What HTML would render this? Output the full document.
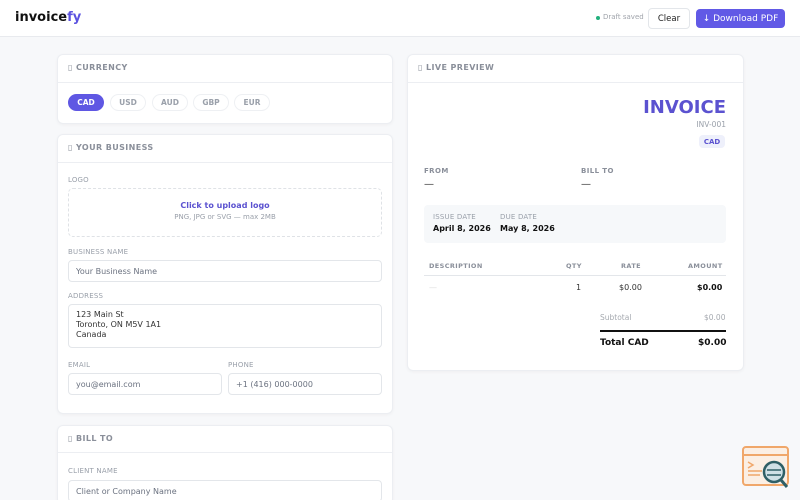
<!DOCTYPE html><html><head><style>
*{box-sizing:border-box;margin:0;padding:0}
html,body{width:800px;height:500px;overflow:hidden}
body{background:#f7f8fa;font-family:"DejaVu Sans","Liberation Sans",sans-serif;position:relative;color:#1a1a2e}
.a{position:absolute}
.hdr{left:0;top:0;width:800px;height:37px;background:#fff;border-bottom:1px solid #e8eaee}
.card{background:#fff;border:1px solid #eceef2;border-radius:6px;box-shadow:0 1px 3px rgba(0,0,0,.04)}
.ch{font-size:8px;font-weight:bold;color:#8a8f9a;letter-spacing:.4px}
.hl{height:1px;background:#eceef2}
.lbl{font-size:7px;color:#9aa0aa;letter-spacing:.2px}
.inp{border:1px solid #e3e6ea;border-radius:4px;background:#fff;font-size:8px;color:#6b7280;padding-left:7px;display:flex;align-items:center}
.pill{height:17px;border-radius:9px;border:1px solid #eef0f3;font-size:7.5px;font-weight:bold;color:#9aa0aa;display:flex;align-items:center;justify-content:center}
</style></head><body>
<div class="a hdr"></div>
<div class="a" style="left:15px;top:10px;font-size:13px;font-weight:bold;color:#111">invoice<span style="color:#5b52e0">fy</span></div>
<div class="a" style="left:596px;top:16px;width:4px;height:4px;border-radius:50%;background:#22b07d"></div>
<div class="a" style="left:603px;top:13px;font-size:7px;color:#a0a4ab">Draft saved</div>
<div class="a" style="left:648px;top:8px;width:42px;height:21px;border:1px solid #e3e6ea;border-radius:4px;font-size:8.5px;color:#222;display:flex;align-items:center;justify-content:center;background:#fff">Clear</div>
<div class="a" style="left:696px;top:9px;width:89px;height:19px;border-radius:4px;background:#6159e6;font-size:9px;color:#fff;display:flex;align-items:center;justify-content:center">↓ Download PDF</div>

<div class="a card" style="left:57px;top:54px;width:336px;height:70px"></div>
<div class="a ch" style="left:68px;top:63px">▯ CURRENCY</div>
<div class="a hl" style="left:57px;top:82px;width:336px"></div>
<div class="a pill" style="left:68px;top:94px;width:36px;background:#5f57e3;color:#fff;border-color:#5f57e3">CAD</div>
<div class="a pill" style="left:110px;top:94px;width:36px">USD</div>
<div class="a pill" style="left:152px;top:94px;width:36px">AUD</div>
<div class="a pill" style="left:193px;top:94px;width:36px">GBP</div>
<div class="a pill" style="left:234px;top:94px;width:36px">EUR</div>

<div class="a card" style="left:57px;top:134px;width:336px;height:280px"></div>
<div class="a ch" style="left:68px;top:143px">▯ YOUR BUSINESS</div>
<div class="a hl" style="left:57px;top:162px;width:336px"></div>
<div class="a lbl" style="left:68px;top:176px">LOGO</div>
<div class="a" style="left:68px;top:188px;width:314px;height:49px;border:1px dashed #dfe2e6;border-radius:5px;text-align:center">
<div style="font-size:8px;font-weight:bold;color:#5b52d0;margin-top:12px">Click to upload logo</div>
<div style="font-size:7px;color:#9aa0aa;margin-top:3px">PNG, JPG or SVG — max 2MB</div></div>
<div class="a lbl" style="left:68px;top:248px">BUSINESS NAME</div>
<div class="a inp" style="left:68px;top:260px;width:314px;height:22px">Your Business Name</div>
<div class="a lbl" style="left:68px;top:292px">ADDRESS</div>
<div class="a inp" style="left:68px;top:304px;width:314px;height:44px;align-items:flex-start;padding-top:5px;line-height:10px;color:#333">123 Main St<br>Toronto, ON M5V 1A1<br>Canada</div>
<div class="a lbl" style="left:68px;top:361px">EMAIL</div>
<div class="a lbl" style="left:228px;top:361px">PHONE</div>
<div class="a inp" style="left:68px;top:373px;width:154px;height:22px">you@email.com</div>
<div class="a inp" style="left:228px;top:373px;width:154px;height:22px">+1 (416) 000-0000</div>

<div class="a card" style="left:57px;top:425px;width:336px;height:80px"></div>
<div class="a ch" style="left:68px;top:434px">▯ BILL TO</div>
<div class="a hl" style="left:57px;top:452px;width:336px"></div>
<div class="a lbl" style="left:68px;top:467px">CLIENT NAME</div>
<div class="a inp" style="left:68px;top:480px;width:314px;height:22px">Client or Company Name</div>

<div class="a card" style="left:407px;top:54px;width:337px;height:317px"></div>
<div class="a ch" style="left:418px;top:63px">▯ LIVE PREVIEW</div>
<div class="a hl" style="left:407px;top:82px;width:337px"></div>
<div class="a" style="right:74px;top:97px;font-size:18px;font-weight:bold;color:#5b52d0">INVOICE</div>
<div class="a" style="right:74px;top:120px;font-size:7.5px;color:#9aa0aa">INV-001</div>
<div class="a" style="left:699px;top:135px;width:26px;height:13px;border-radius:4px;background:#eef0fb;font-size:7px;font-weight:bold;color:#5b52d0;display:flex;align-items:center;justify-content:center">CAD</div>
<div class="a ch" style="left:424px;top:167px;font-size:7px">FROM</div>
<div class="a ch" style="left:581px;top:167px;font-size:7px">BILL TO</div>
<div class="a" style="left:424px;top:179px;font-size:10px;color:#333">—</div>
<div class="a" style="left:581px;top:179px;font-size:10px;color:#333">—</div>
<div class="a" style="left:424px;top:205px;width:302px;height:38px;background:#f6f8fa;border-radius:4px"></div>
<div class="a lbl" style="left:433px;top:213px">ISSUE DATE</div>
<div class="a lbl" style="left:500px;top:213px">DUE DATE</div>
<div class="a" style="left:433px;top:224px;font-size:8px;font-weight:bold;color:#111">April 8, 2026</div>
<div class="a" style="left:500px;top:224px;font-size:8px;font-weight:bold;color:#111">May 8, 2026</div>
<div class="a ch" style="left:429px;top:262px;font-size:6.5px">DESCRIPTION</div>
<div class="a ch" style="left:566px;top:262px;font-size:6.5px">QTY</div>
<div class="a ch" style="left:621px;top:262px;font-size:6.5px">RATE</div>
<div class="a ch" style="left:688px;top:262px;font-size:6.5px">AMOUNT</div>
<div class="a hl" style="left:424px;top:275px;width:302px;background:#e3e6ea"></div>
<div class="a" style="left:429px;top:283px;font-size:8px;color:#ddd">—</div>
<div class="a" style="left:576px;top:283px;font-size:8px;color:#333">1</div>
<div class="a" style="left:619px;top:283px;font-size:8px;color:#333">$0.00</div>
<div class="a" style="left:697px;top:283px;font-size:8px;font-weight:bold;color:#111">$0.00</div>
<div class="a" style="left:600px;top:313px;font-size:7.5px;color:#a6aab0">Subtotal</div>
<div class="a" style="left:704px;top:313px;font-size:7.5px;color:#a6aab0">$0.00</div>
<div class="a" style="left:600px;top:330px;width:126px;height:2px;background:#111"></div>
<div class="a" style="left:600px;top:338px;font-size:9px;font-weight:bold;color:#111">Total CAD</div>
<div class="a" style="left:698px;top:338px;font-size:9px;font-weight:bold;color:#111">$0.00</div>

<svg class="a" style="left:740px;top:444px" width="52" height="46" viewBox="0 0 52 46">
<rect x="3" y="3" width="45" height="38" rx="3" fill="#fbefe4" stroke="#f0a76a" stroke-width="2"/>
<line x1="3" y1="11" x2="48" y2="11" stroke="#f0a76a" stroke-width="2"/>
<path d="M8 18l5 3-5 3M8 27h14M8 31h12" stroke="#f0a76a" stroke-width="1.5" fill="none"/>
<circle cx="34" cy="28" r="10" fill="#cfe0e6" stroke="#2e5f66" stroke-width="2.5"/>
<path d="M27 26h14M27 31h14" stroke="#2e5f66" stroke-width="1.5"/>
<line x1="41" y1="36" x2="47" y2="43" stroke="#2e5f66" stroke-width="3"/>
</svg>
</body></html>
